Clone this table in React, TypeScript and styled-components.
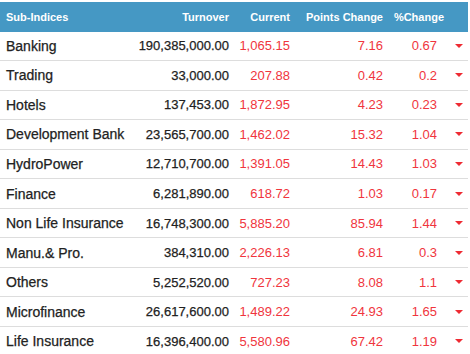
import React from 'react';
import styled, { createGlobalStyle } from 'styled-components';

type SubIndex = Readonly<{
    name: string;
    turnover: string;
    current: string;
    points: string;
    percent: string;
}>;

const subIndices: ReadonlyArray<SubIndex> = [
    { name: 'Banking', turnover: '190,385,000.00', current: '1,065.15', points: '7.16', percent: '0.67' },
    { name: 'Trading', turnover: '33,000.00', current: '207.88', points: '0.42', percent: '0.2' },
    { name: 'Hotels', turnover: '137,453.00', current: '1,872.95', points: '4.23', percent: '0.23' },
    { name: 'Development Bank', turnover: '23,565,700.00', current: '1,462.02', points: '15.32', percent: '1.04' },
    { name: 'HydroPower', turnover: '12,710,700.00', current: '1,391.05', points: '14.43', percent: '1.03' },
    { name: 'Finance', turnover: '6,281,890.00', current: '618.72', points: '1.03', percent: '0.17' },
    { name: 'Non Life Insurance', turnover: '16,748,300.00', current: '5,885.20', points: '85.94', percent: '1.44' },
    { name: 'Manu.& Pro.', turnover: '384,310.00', current: '2,226.13', points: '6.81', percent: '0.3' },
    { name: 'Others', turnover: '5,252,520.00', current: '727.23', points: '8.08', percent: '1.1' },
    { name: 'Microfinance', turnover: '26,617,600.00', current: '1,489.22', points: '24.93', percent: '1.65' },
    { name: 'Life Insurance', turnover: '16,396,400.00', current: '5,580.96', points: '67.42', percent: '1.19' },
];

const GlobalStyle = createGlobalStyle`
    body {
        margin: 0;
        background: #fff;
        font-family: 'Liberation Sans', Arial, sans-serif;
    }
`;

const App = () => (
    <>
        <GlobalStyle />
        <Table>
            <HeaderRow>
                <HeaderCell align="left">Sub-Indices</HeaderCell>
                <HeaderCell>Turnover</HeaderCell>
                <HeaderCell>Current</HeaderCell>
                <HeaderCell>Points Change</HeaderCell>
                <HeaderCell>%Change</HeaderCell>
                <span />
            </HeaderRow>
            {subIndices.map(({ name, turnover, current, points, percent }) => (
                <Row key={name}>
                    <NameCell>{name}</NameCell>
                    <TurnoverCell>{turnover}</TurnoverCell>
                    <ChangeCell>{current}</ChangeCell>
                    <ChangeCell>{points}</ChangeCell>
                    <ChangeCell inset>{percent}</ChangeCell>
                    <ArrowCell>
                        <DownArrow />
                    </ArrowCell>
                </Row>
            ))}
        </Table>
    </>
);

// name | turnover | current | points | % | arrow
const columns = '135px 94px 61px 93px 61px 24px';

const Table = styled.div`
    width: 468px;
    padding-top: 2px;
`;

const HeaderRow = styled.div`
    display: grid;
    grid-template-columns: ${columns};
    align-items: center;
    height: 29.5px;
    background: #4598c4;
    color: #fff;
    font-size: 11px;
    font-weight: bold;
`;

const HeaderCell = styled.div<{ align?: 'left' | 'right' }>`
    text-align: ${({ align }) => align ?? 'right'};
    padding-left: ${({ align }) => (align === 'left' ? '6px' : '0')};
    white-space: nowrap;
`;

const Row = styled.div`
    display: grid;
    grid-template-columns: ${columns};
    align-items: center;
    box-sizing: border-box;
    height: 29.56px;
    border-bottom: 1px solid #dddddd;
    font-size: 13px;
`;

const NameCell = styled.div`
    padding-left: 6px;
    color: #222;
    font-size: 14px;
    -webkit-text-stroke: 0.25px #222;
    white-space: nowrap;
`;

const TurnoverCell = styled.div`
    text-align: right;
    color: #222;
    -webkit-text-stroke: 0.25px #222;
`;

const ChangeCell = styled.div<{ inset?: boolean }>`
    text-align: right;
    color: #f0353d;
    padding-right: ${({ inset }) => (inset ? '7px' : '0')};
`;

const ArrowCell = styled.div`
    display: flex;
    align-items: center;
    padding-left: 11px;
`;

const DownArrow = styled.span`
    width: 0;
    height: 0;
    border-left: 4px solid transparent;
    border-right: 4px solid transparent;
    border-top: 4px solid #ee2b33;
`;

export default App;
